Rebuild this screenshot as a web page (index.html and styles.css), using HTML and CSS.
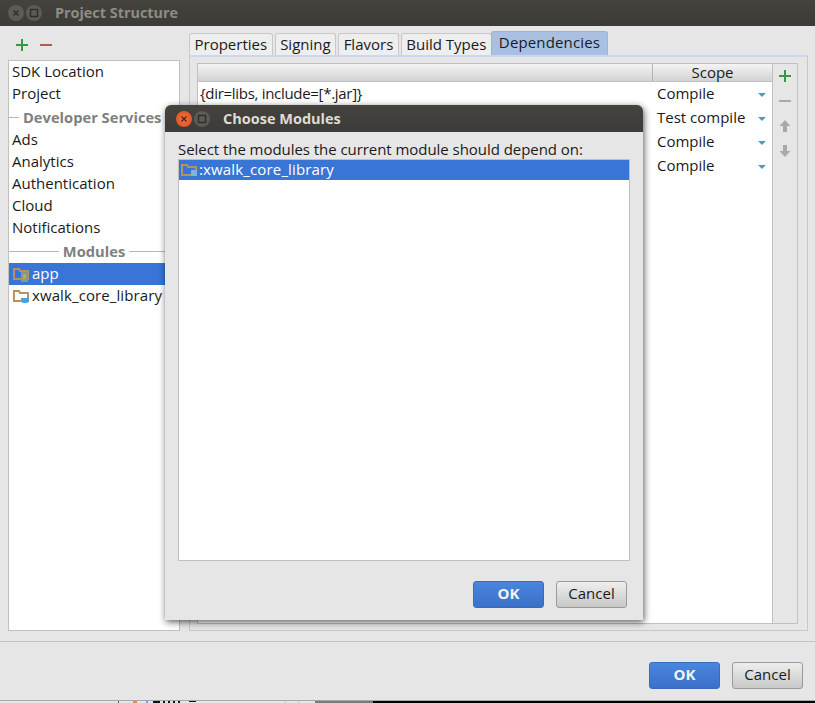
FILE: index.html
```html
<!DOCTYPE html>
<html>
<head>
<meta charset="utf-8">
<title>Project Structure</title>
<link rel="stylesheet" href="styles.css">
</head>
<body>
<div class="window">
  <div class="titlebar">
    <span class="wbtn"><svg width="12" height="12" viewBox="0 0 12 12"><path d="M3.5 3.5l5 5M8.5 3.500l-5 5" stroke="#2e2d2a" stroke-width="1.4"/></svg></span>
    <span class="wbtn"><svg width="12" height="12" viewBox="0 0 12 12"><rect x="2.5" y="2.5" width="7" height="7" fill="none" stroke="#2e2d2a" stroke-width="1.4"/></svg></span>
    <span class="title">Project Structure</span>
  </div>
  <div class="main">
    <div class="left">
      <div class="left-tools">
        <svg width="14" height="14" viewBox="0 0 14 14"><path d="M7 1v12M1 7h12" stroke="#2e9e46" stroke-width="2"/></svg>
        <svg width="14" height="14" viewBox="0 0 14 14"><path d="M1 7h12" stroke="#c0574c" stroke-width="2"/></svg>
      </div>
      <div class="side-list">
        <div class="item">SDK Location</div>
        <div class="item">Project</div>
        <div class="group group-left"><span class="rule short"></span><span class="gtext">Developer Services</span></div>
        <div class="item">Ads</div>
        <div class="item">Analytics</div>
        <div class="item">Authentication</div>
        <div class="item">Cloud</div>
        <div class="item">Notifications</div>
        <div class="group"><span class="rule"></span><span class="gtext">Modules</span><span class="rule"></span></div>
        <div class="item module selected">
          <svg width="18" height="16" viewBox="0 0 18 16"><path d="M1 3h5l1 2h8v8H1z" fill="none" stroke="#b4935f" stroke-width="2"/><rect x="8" y="6" width="7" height="10" fill="#8d9298"/><rect x="10" y="8" width="3" height="5" fill="#9bbf3f"/></svg>
          <span>app</span>
        </div>
        <div class="item module">
          <svg width="18" height="16" viewBox="0 0 18 16"><path d="M1 3h5l1 2h8v8H1z" fill="none" stroke="#b4935f" stroke-width="2"/><path d="M8 10h8v2a3 3 0 0 1-3 3h-2a3 3 0 0 1-3-3z" fill="#4aa3d8"/></svg>
          <span class="wide">xwalk_core_library</span>
        </div>
      </div>
    </div>
    <div class="right">
      <div class="tabs">
        <span class="tab">Properties</span>
        <span class="tab">Signing</span>
        <span class="tab">Flavors</span>
        <span class="tab">Build Types</span>
        <span class="tab active">Dependencies</span>
      </div>
      <div class="tab-panel">
        <div class="table">
          <div class="thead"><span class="col-main"></span><span class="col-scope">Scope</span></div>
          <div class="row"><span class="col-main tight">{dir=libs, include=[*.jar]}</span><span class="col-scope">Compile<i class="caret"></i></span></div>
          <div class="row"><span class="col-main"></span><span class="col-scope">Test compile<i class="caret"></i></span></div>
          <div class="row"><span class="col-main"></span><span class="col-scope">Compile<i class="caret"></i></span></div>
          <div class="row"><span class="col-main"></span><span class="col-scope">Compile<i class="caret"></i></span></div>
        </div>
        <div class="table-tools">
          <svg width="14" height="14" viewBox="0 0 14 14"><path d="M7 1v12M1 7h12" stroke="#2e9e46" stroke-width="2"/></svg>
          <svg width="14" height="14" viewBox="0 0 14 14"><path d="M1 7h12" stroke="#a9a9a9" stroke-width="2"/></svg>
          <svg width="14" height="14" viewBox="0 0 14 14"><path d="M7 1l5.500 6H9v6H5V7H1.500z" fill="#a9a9a9"/></svg>
          <svg width="14" height="14" viewBox="0 0 14 14"><path d="M7 13l5.500-6H9V1H5v6H1.500z" fill="#a9a9a9"/></svg>
        </div>
      </div>
    </div>
  </div>
  <div class="footer">
    <button class="btn primary">OK</button>
    <button class="btn">Cancel</button>
  </div>
</div>
<div class="taskstrip">
  <svg class="strip-left" width="315" height="2" viewBox="0 0 315 2"><rect width="315" height="2" fill="#e6e6e6"/><rect x="118" width="1" height="2" fill="#555"/><rect x="133" width="4" height="2" fill="#d9963c"/><rect x="146" width="2" height="2" fill="#6fa0d8"/><path d="M153 0h7v2h-7zM163 0h2v2h-2zM168 0h2v2h-2zM173 0h2v2h-2zM178 0h2v2h-2zM189 0h7v1h-7z" fill="#111"/><rect x="285" width="1" height="2" fill="#c4c4c4"/><rect x="298" width="1" height="2" fill="#c4c4c4"/></svg>
  <span class="strip-mid"></span>
</div>

<div class="dialog">
  <div class="titlebar dialog-bar">
    <span class="wbtn close"><svg width="12" height="12" viewBox="0 0 12 12"><path d="M3.500 3.500l5 5M8.500 3.500l-5 5" stroke="#5a2210" stroke-width="1.400"/></svg></span>
    <span class="wbtn"><svg width="12" height="12" viewBox="0 0 12 12"><rect x="2.500" y="2.500" width="7" height="7" fill="none" stroke="#2e2d2a" stroke-width="1.400"/></svg></span>
    <span class="title">Choose Modules</span>
  </div>
  <div class="dialog-body">
    <div class="prompt">Select the modules the current module should depend on:</div>
    <div class="mod-list">
      <div class="mod-item">
        <svg width="18" height="16" viewBox="0 0 18 16"><path d="M1 3h5l1 2h8v8H1z" fill="none" stroke="#b4935f" stroke-width="2"/><rect x="10" y="8" width="6" height="6" fill="#7fb4d6"/></svg>
        <span>:xwalk_core_library</span>
      </div>
    </div>
    <div class="dialog-actions">
      <button class="btn primary">OK</button>
      <button class="btn">Cancel</button>
    </div>
  </div>
</div>
</body>
</html>
```
FILE: styles.css
```css
* { box-sizing: border-box; }
html, body { margin: 0; padding: 0; }
body {
  width: 815px;
  height: 703px;
  overflow: hidden;
  position: relative;
  background: #000;
  font-family: "Open Sans", "Noto Sans", sans-serif;
  font-size: 15px;
  color: #1a1a1a;
}
.window {
  height: 700px;
  background: #e6e6e6;
  display: flex;
  flex-direction: column;
}
.titlebar {
  height: 26px;
  flex: none;
  background: linear-gradient(#45433e, #3c3b37);
  display: flex;
  align-items: center;
  padding-left: 8px;
  gap: 2px;
}
.wbtn {
  width: 16px;
  height: 16px;
  border-radius: 50%;
  background: #5c5b56;
  display: flex;
  align-items: center;
  justify-content: center;
}
.wbtn.close { background: radial-gradient(#f07746, #d9481f); }
.title {
  margin-left: 11px;
  padding-bottom: 2px;
  font-weight: 700;
  font-size: 14.4px;
  color: #8f8c83;
}
.main { height: 616px; flex: none; display: flex; padding-left: 8px; border-bottom: 1px solid #c4c4c4; }
.left { width: 172px; flex: none; margin-right: 9px; }
.left-tools { height: 34px; display: flex; align-items: center; gap: 10px; padding-left: 7px; padding-top: 3px; }
.side-list { height: 571px; background: #fff; border: 1px solid #c0c0c0; overflow: hidden; }
.item { height: 22px; line-height: 20px; padding-left: 3px; white-space: nowrap; }
.group { height: 24px; display: flex; align-items: center; gap: 4px; font-weight: 700; color: #7f7f7f; font-size: 14.7px; }
.group-left .rule { flex: none; width: 10px; }
.rule { flex: 1; height: 1px; background: #b8b8b8; }
.module { display: flex; align-items: center; gap: 1px; padding-left: 4px; }
.module span { padding-bottom: 2px; }
.wide { letter-spacing: .1px; }
.selected { background: #3875d7; color: #fff; }
.right { width: 619px; flex: none; padding-top: 7px; }
.tabs { height: 22px; display: flex; gap: 2px; }
.tab {
  height: 22px;
  line-height: 20px;
  padding: 0 4.5px;
  background: #eeeeee;
  border: 1px solid #c8c8c8;
  border-bottom: none;
  border-radius: 3px 3px 0 0;
  white-space: nowrap;
}
.tab.active { background: #a9c0e3; border-color: #9db4d6; margin: -2px 0 0 -3px; height: 24px; padding: 0 7px; letter-spacing: .15px; }
.tab-panel {
  height: 576px;
  border: 1px solid #c8c8c8;
  border-top: 2px solid #c9d8ee;
  padding: 6px 9px 6px 7px;
  display: flex;
}
.table { width: 575px; flex: none; background: #fff; border: 1px solid #c0c0c0; border-right: 0; }
.thead {
  height: 18px;
  display: flex;
  background: linear-gradient(#f4f4f4, #d2d2d2);
  border-bottom: 1px solid #c0c0c0;
  line-height: 16px;
}
.row { height: 24px; line-height: 22px; display: flex; }
.col-main { flex: 1; padding-left: 3px; white-space: nowrap; overflow: hidden; }
.tight { letter-spacing: -.3px; padding-left: 2px; }
.col-scope { width: 120px; flex: none; padding-left: 5px; position: relative; white-space: nowrap; }
.thead .col-scope { border-left: 1px solid #b5b5b5; text-align: center; padding: 0; }
.caret {
  position: absolute;
  right: 6px;
  top: 11px;
  border-left: 4px solid transparent;
  border-right: 4px solid transparent;
  border-top: 4px solid #4b9bc8;
}
.table-tools {
  flex: 1;
  border: 1px solid #c0c0c0;
  display: flex;
  flex-direction: column;
  align-items: center;
  gap: 11px;
  padding-top: 5px;
}
.footer { height: 58px; flex: none; display: flex; justify-content: flex-end; align-items: flex-start; gap: 12px; padding: 20px 12px 0 0; }
.btn {
  width: 71px;
  height: 27px;
  font: 15px "Open Sans", "Noto Sans", sans-serif;
  color: #1a1a1a;
  border: 1px solid #9a9a9a;
  border-radius: 3px;
  background: linear-gradient(#eeeeee, #c8c8c8);
  padding: 0 0 3px;
}
.btn.primary { background: linear-gradient(#4a85de, #3a70c8); border-color: #3a6cbc; color: #f2f2f2; font-weight: 700; }
.taskstrip { height: 3px; background: #000; border-top: 1px solid #a8a8a8; display: flex; }
.strip-left { display: block; flex: none; }
.strip-mid { width: 58px; background: #7a7a7a; flex: none; }
.dialog {
  position: absolute;
  left: 165px;
  top: 105px;
  width: 478px;
  height: 515px;
  background: #e6e6e6;
  border-radius: 6px 6px 0 0;
  box-shadow: 1px 2px 7px rgba(0,0,0,.65);
  display: flex;
  flex-direction: column;
}
.dialog-bar { height: 27px; border-radius: 6px 6px 0 0; padding-left: 11px; }
.dialog-bar .title { color: #dfdbd2; font-size: 14.5px; padding-bottom: 0; }
.dialog-body { flex: 1; display: flex; flex-direction: column; padding: 8px 13px 0; }
.prompt { height: 19px; line-height: 19px; white-space: nowrap; letter-spacing: -.05px; }
.mod-list { width: 452px; height: 402px; background: #fff; border: 1px solid #c0c0c0; }
.mod-item { height: 20px; background: #3875d7; color: #fff; display: flex; align-items: center; padding-left: 2px; letter-spacing: .15px; }
.mod-item span { padding-bottom: 2px; }
.dialog-actions { display: flex; justify-content: flex-end; gap: 12px; padding: 20px 3px 0 0; }
```
